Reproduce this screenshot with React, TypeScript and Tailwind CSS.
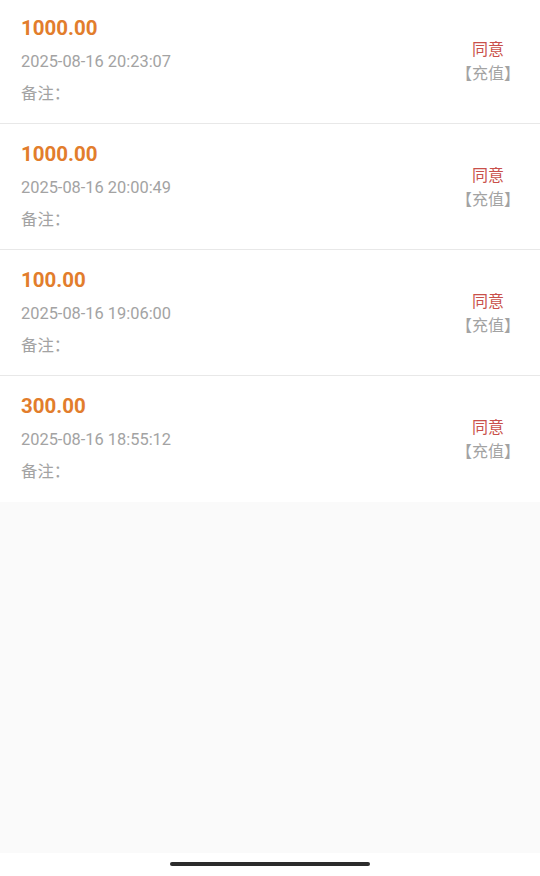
import React from "react";

interface Record {
    amount: string;
    time: string;
    note: string;
    status: string;
    type: string;
}

const RECORDS: Record[] = [
    { amount: "1000.00", time: "2025-08-16 20:23:07", note: "", status: "同意", type: "充值" },
    { amount: "1000.00", time: "2025-08-16 20:00:49", note: "", status: "同意", type: "充值" },
    { amount: "100.00", time: "2025-08-16 19:06:00", note: "", status: "同意", type: "充值" },
    { amount: "300.00", time: "2025-08-16 18:55:12", note: "", status: "同意", type: "充值" },
];

const FONT = { fontFamily: 'Roboto, "Noto Sans CJK SC", sans-serif' };

function RecordRow({ r, last }: { r: Record; last: boolean }) {
    return (
        <div
            className={`h-[126px] flex items-center justify-between pl-[21px] pr-[28px] bg-white ${
                last ? "" : "border-b border-[#e8e8e8]"
            }`}
        >
            <div className="flex flex-col gap-[8px] -mt-[2px]">
                <span className="text-[20.5px] leading-[28px] font-bold text-[#e27d2c]">{r.amount}</span>
                <span className="text-[16.4px] leading-[24px] text-[#a3a3a3]">{r.time}</span>
                <span className="text-[16.4px] leading-[24px] text-[#a3a3a3]">备注：{r.note}</span>
            </div>
            <div className="flex flex-col items-center -mr-[8px] mt-[2px]">
                <span className="text-[16px] leading-[24px] text-[#c9504a]">{r.status}</span>
                <span className="text-[16px] leading-[24px] text-[#a3a3a3]">【{r.type}】</span>
            </div>
        </div>
    );
}

export default function App() {
    return (
        <div className="w-[540px] h-[876px] flex flex-col bg-[#fafafa] overflow-hidden" style={FONT}>
            <div className="flex flex-col -mt-[2px]">
                {RECORDS.map((r, i) => (
                    <RecordRow key={i} r={r} last={i === RECORDS.length - 1} />
                ))}
            </div>
            <div className="flex-1" />
            <div className="h-[23px] bg-white flex justify-center pt-[9px]">
                <div className="w-[200px] h-[4px] rounded-full bg-[#2b2b2b]" />
            </div>
        </div>
    );
}
